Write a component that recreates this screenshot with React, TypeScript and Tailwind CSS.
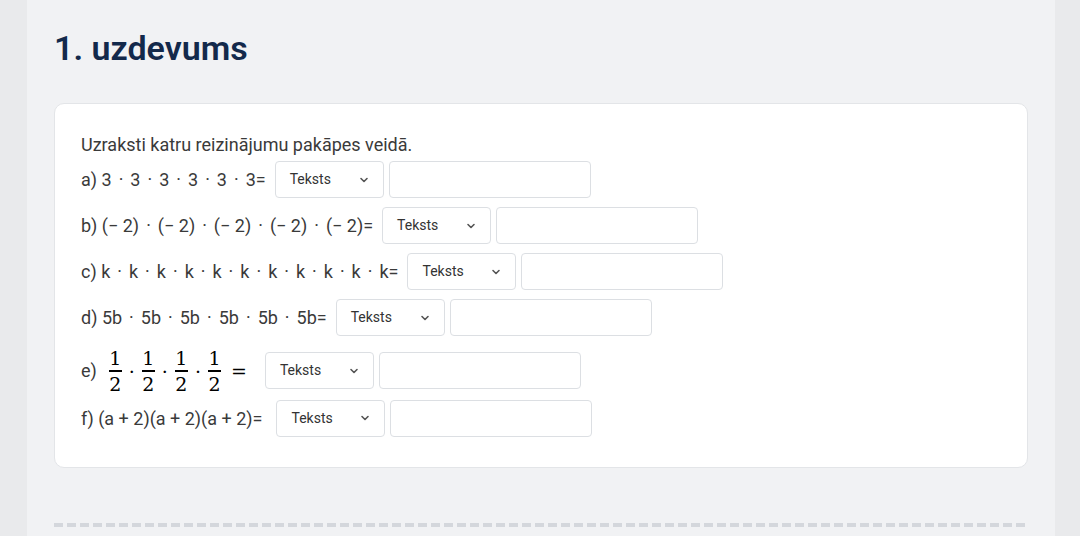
import React from 'react';

const Dot = () => <span className="mx-[7px]">·</span>;

function Answer() {
  return (
    <div className="flex items-center gap-[5px] ml-[9px]">
      <div className="flex h-[37px] w-[109px] items-center justify-between rounded-[4px] border border-[#dcdfe3] bg-white pl-[14px] pr-[13px] text-[14px] text-[#333]">
        <span>Teksts</span>
        <svg width="12" height="12" viewBox="0 0 12 12" fill="none">
          <path d="M3 4.5L6 7.5L9 4.5" stroke="#555" strokeWidth="1.6" strokeLinecap="round" strokeLinejoin="round" />
        </svg>
      </div>
      <div className="h-[37px] w-[202px] rounded-[4px] border border-[#dcdfe3] bg-white" />
    </div>
  );
}

function Frac() {
  return (
    <span className="inline-flex flex-col items-center px-[1px] font-['DejaVu_Serif',serif] text-[19px] leading-[22px] text-black">
      <span>1</span>
      <span className="my-[1px] h-[1.5px] w-[13px] bg-black" />
      <span>2</span>
    </span>
  );
}

export default function App() {
  return (
    <div className="min-h-screen bg-[#e9eaec] font-['Roboto',sans-serif]">
      <div className="ml-[27px] mr-[25px] min-h-[536px] bg-[#f1f2f4] px-[27px] pt-[28px]">
        <h1 className="text-[34px] font-semibold leading-[40px] text-[#13294b]">1. uzdevums</h1>
        <div className="mt-[35px] rounded-[10px] border border-[#e3e5e8] bg-white px-[26px] pt-[28px] pb-[30px] text-[18px] text-[#3a3a3a]">
          <p className="leading-[26px]">Uzraksti katru reizinājumu pakāpes veidā.</p>
          <div className="mt-[3px] flex items-center">
            <span>a) 3<Dot />3<Dot />3<Dot />3<Dot />3<Dot />3=</span>
            <Answer />
          </div>
          <div className="mt-[9px] flex items-center">
            <span>b) (− 2)<Dot />(− 2)<Dot />(− 2)<Dot />(− 2)<Dot />(− 2)=</span>
            <Answer />
          </div>
          <div className="mt-[9px] flex items-center">
            <span>
              c) k<Dot />k<Dot />k<Dot />k<Dot />k<Dot />k<Dot />k<Dot />k<Dot />k<Dot />k<Dot />k=
            </span>
            <Answer />
          </div>
          <div className="mt-[9px] flex items-center">
            <span>d) 5b<Dot />5b<Dot />5b<Dot />5b<Dot />5b<Dot />5b=</span>
            <Answer />
          </div>
          <div className="mt-[11px] flex items-center">
            <span>e)</span>
            <span className="ml-[11px] flex items-center font-['DejaVu_Serif',serif] text-[19px] text-black">
              <Frac />
              <span className="mx-[6px]">·</span>
              <Frac />
              <span className="mx-[6px]">·</span>
              <Frac />
              <span className="mx-[6px]">·</span>
              <Frac />
              <span className="ml-[9px]">=</span>
            </span>
            <span className="w-[9px]" />
            <Answer />
          </div>
          <div className="mt-[5px] flex items-center">
            <span>f) (a + 2)(a + 2)(a + 2)=</span>
            <span className="w-[5px]" />
            <Answer />
          </div>
        </div>
        <div className="mt-[55px] h-[4px] bg-[repeating-linear-gradient(90deg,#d4d7dc_0px,#d4d7dc_9px,transparent_9px,transparent_13px)]" />
      </div>
    </div>
  );
}
